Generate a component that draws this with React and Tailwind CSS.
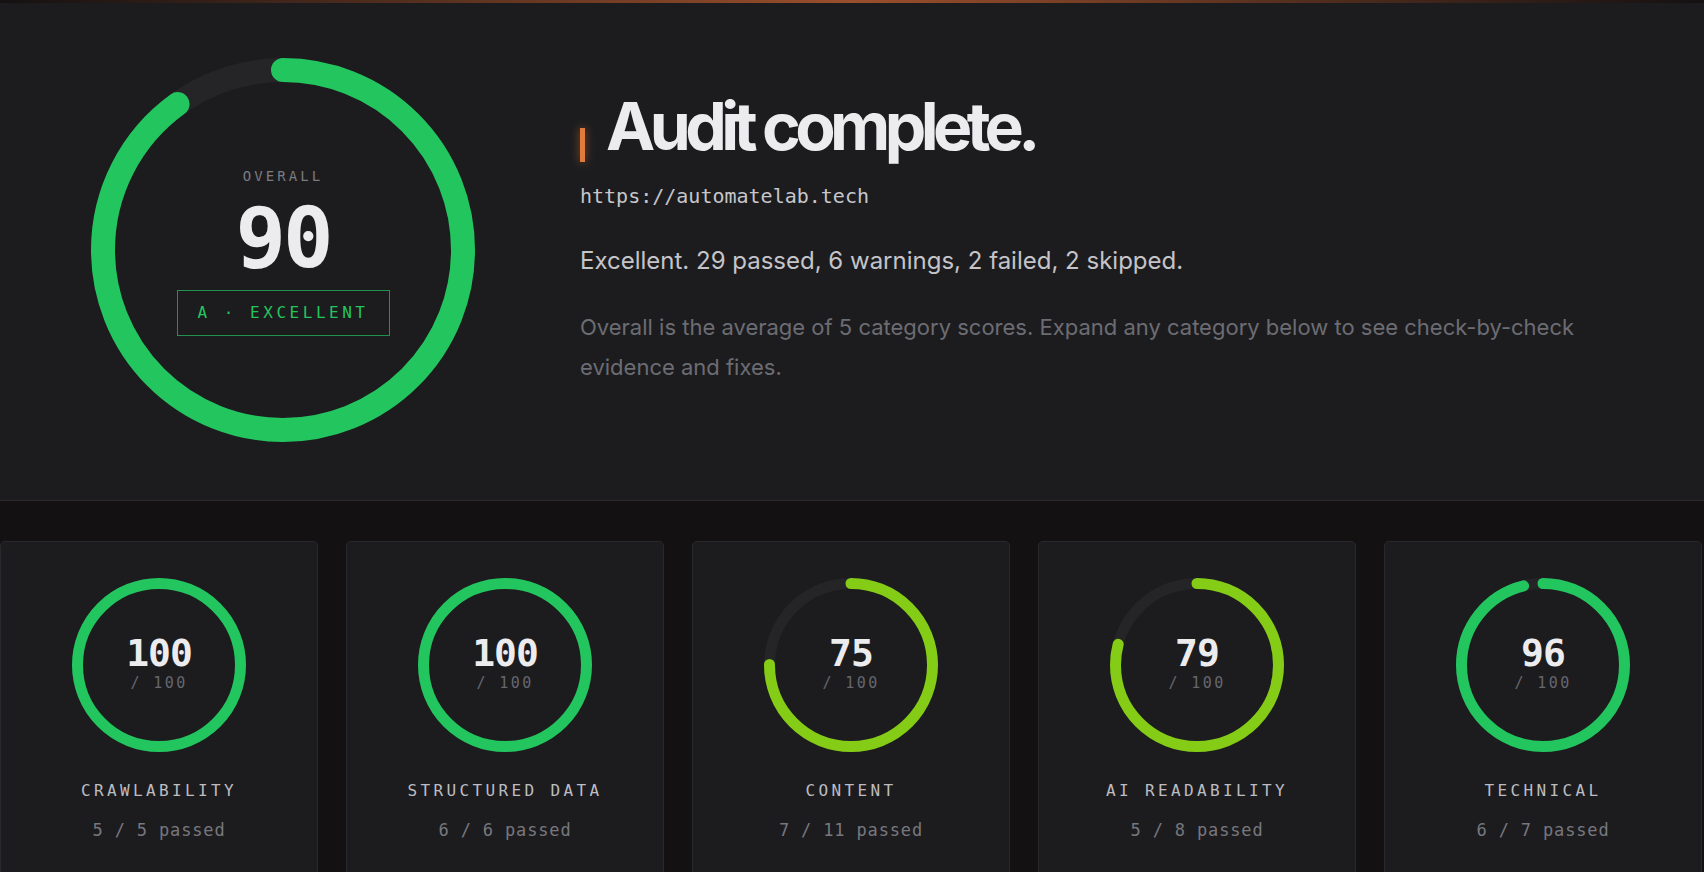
import React from 'react';

const mono = "font-['DejaVu_Sans_Mono','Liberation_Mono',monospace]";
const sans = "font-['Inter','Noto_Sans',sans-serif]";

const CATEGORIES = [
  { id: 'crawl', label: 'CRAWLABILITY', score: 100, passed: '5 / 5 passed', color: '#22c55e' },
  { id: 'structured', label: 'STRUCTURED DATA', score: 100, passed: '6 / 6 passed', color: '#22c55e' },
  { id: 'content', label: 'CONTENT', score: 75, passed: '7 / 11 passed', color: '#84cc16' },
  { id: 'ai', label: 'AI READABILITY', score: 79, passed: '5 / 8 passed', color: '#84cc16' },
  { id: 'technical', label: 'TECHNICAL', score: 96, passed: '6 / 7 passed', color: '#22c55e' },
];

// score ring: track + arc drawn from 12 o'clock clockwise
function Ring({ size, stroke, pct, color, children }) {
  const c = size / 2;
  const r = (size - stroke) / 2;
  const circ = 2 * Math.PI * r;
  const dash = pct >= 100 ? circ : (circ * pct) / 100;
  return (
    <div className="relative shrink-0" style={{ width: size, height: size }}>
      <svg width={size} height={size} viewBox={`0 0 ${size} ${size}`}>
        <circle cx={c} cy={c} r={r} fill="none" stroke="#252528" strokeWidth={stroke} />
        <circle
          cx={c}
          cy={c}
          r={r}
          fill="none"
          stroke={color}
          strokeWidth={stroke}
          strokeLinecap={pct >= 100 ? 'butt' : 'round'}
          strokeDasharray={`${dash} ${circ}`}
          transform={`rotate(-90 ${c} ${c})`}
        />
      </svg>
      <div className="absolute inset-0 flex flex-col items-center justify-center">{children}</div>
    </div>
  );
}

function CategoryCard({ cat }) {
  return (
    <div className="flex h-[340px] flex-col items-center rounded-[5px] border border-[#29292d] bg-[#1c1c1f] pt-[36px]">
      <Ring size={174} stroke={11} pct={cat.score} color={cat.color}>
        <div className={`${mono} mt-[-6px] text-[38px] font-bold leading-[40px] tracking-[-1px] text-[#ececef]`}>
          {cat.score}
        </div>
        <div className={`${mono} mt-[2px] text-[15px] leading-[16px] tracking-[0.16em] text-[#66666c]`}>
          / 100
        </div>
      </Ring>
      <div className={`${mono} mt-[29px] text-[16px] leading-[20px] tracking-[0.21em] text-[#bcbcc1]`}>
        {cat.label}
      </div>
      <div className={`${mono} mt-[19px] text-[17px] leading-[20px] tracking-[0.05em] text-[#77777d]`}>
        {cat.passed}
      </div>
    </div>
  );
}

export default function App() {
  return (
    <main className="min-h-screen overflow-hidden bg-[#141112]">
      <div className="h-[3px] bg-gradient-to-r from-transparent via-[#9a4f2c] to-transparent" />
      <section className="flex h-[498px] items-start border-b border-[#2b2b2f] bg-[#1c1c1f] pl-[91px] pt-[55px]">
        <Ring size={384} stroke={24} pct={90} color="#22c55e">
          <div className={`${mono} mt-[4px] text-[14px] leading-[16px] tracking-[0.22em] text-[#7b7b81]`}>
            OVERALL
          </div>
          <div className={`${mono} mt-[12px] text-[84px] font-bold leading-[84px] tracking-[-3px] text-[#ececef]`}>
            90
          </div>
          <div
            className={`${mono} mt-[10px] flex h-[46px] w-[213px] items-center justify-center border border-[#22c55e]/70 text-[16px] tracking-[0.22em] text-[#22c55e]`}
          >
            A · EXCELLENT
          </div>
        </Ring>
        <div className="ml-[105px] max-w-[1030px] pt-[28px]">
          <div className="flex items-end">
            <span className="mb-[4px] mr-[21px] h-[34px] w-[5px] bg-[#e07b3c] shadow-[0_0_10px_rgba(224,123,60,0.6)]" />
            <h1 className={`${sans} text-[66px] font-bold leading-[80px] tracking-[-0.085em] text-[#ececef]`}>
              Audit complete.
            </h1>
          </div>
          <div className={`${mono} mt-[18px] text-[20px] leading-[24px] text-[#c6c6cb]`}>
            https://automatelab.tech
          </div>
          <p className={`${sans} mt-[38px] text-[24px] leading-[30px] text-[#c4c4c9]`}>
            Excellent. 29 passed, 6 warnings, 2 failed, 2 skipped.
          </p>
          <p className={`${sans} mt-[31px] text-[22px] leading-[40px] text-[#6c6c73]`}>
            Overall is the average of 5 category scores. Expand any category below to see check-by-check
            evidence and fixes.
          </p>
        </div>
      </section>
      <div className="grid w-[1702px] grid-cols-5 gap-[28px] pt-[40px]">
        {CATEGORIES.map((cat) => (
          <CategoryCard key={cat.id} cat={cat} />
        ))}
      </div>
    </main>
  );
}
